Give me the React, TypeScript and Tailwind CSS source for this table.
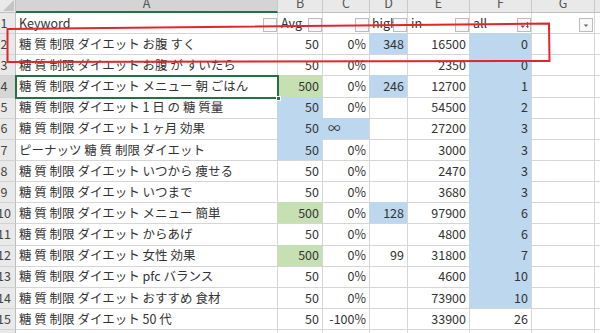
import React from "react";

type Fill = "b" | "g" | "";
type Row = {
  a: string;
  b: string;
  bf?: Fill;
  c: string;
  cf?: Fill;
  cl?: boolean;
  d: string;
  df?: Fill;
  e: string;
  f: string;
  ff?: Fill;
};

const rows: Row[] = [
  { a: "糖 質 制限 ダイエット お腹 すく", b: "50", c: "0%", d: "348", df: "b", e: "16500", f: "0", ff: "b" },
  { a: "糖 質 制限 ダイエット お腹 が すいたら", b: "50", c: "0%", d: "", e: "2350", f: "0", ff: "b" },
  { a: "糖 質 制限 ダイエット メニュー 朝 ごはん", b: "500", bf: "g", c: "0%", d: "246", df: "b", e: "12700", f: "1", ff: "b" },
  { a: "糖 質 制限 ダイエット 1 日 の 糖 質量", b: "50", bf: "b", c: "0%", d: "", e: "54500", f: "2", ff: "b" },
  { a: "糖 質 制限 ダイエット 1 ヶ月 効果", b: "50", bf: "b", c: "∞", cf: "b", cl: true, d: "", e: "27200", f: "3", ff: "b" },
  { a: "ピーナッツ 糖 質 制限 ダイエット", b: "50", bf: "b", c: "0%", d: "", e: "3000", f: "3", ff: "b" },
  { a: "糖 質 制限 ダイエット いつから 痩せる", b: "50", c: "0%", d: "", e: "2470", f: "3", ff: "b" },
  { a: "糖 質 制限 ダイエット いつまで", b: "50", c: "0%", d: "", e: "3680", f: "3", ff: "b" },
  { a: "糖 質 制限 ダイエット メニュー 簡単", b: "500", bf: "g", c: "0%", d: "128", df: "b", e: "97900", f: "6", ff: "b" },
  { a: "糖 質 制限 ダイエット からあげ", b: "50", c: "0%", d: "", e: "4800", f: "6", ff: "b" },
  { a: "糖 質 制限 ダイエット 女性 効果", b: "500", bf: "g", c: "0%", d: "99", e: "31800", f: "7", ff: "b" },
  { a: "糖 質 制限 ダイエット pfc バランス", b: "50", c: "0%", d: "", e: "4600", f: "10", ff: "b" },
  { a: "糖 質 制限 ダイエット おすすめ 食材", b: "50", c: "0%", d: "", e: "73900", f: "10", ff: "b" },
  { a: "糖 質 制限 ダイエット 50 代", b: "50", c: "-100%", d: "", e: "33900", f: "26" },
];

const base =
  "h-full shrink-0 border-r border-b border-[#d6d6d6] flex items-center overflow-hidden whitespace-nowrap";
const right = "justify-end pr-[3px]";
const fillCls = (f?: Fill) =>
  f === "b"
    ? "bg-[#bdd7ee] border-[#bdd7ee] shadow-[0_-1px_0_#bdd7ee,-1px_0_0_#bdd7ee]"
    : f === "g"
    ? "bg-[#c6e0b4] border-[#c6e0b4] shadow-[0_-1px_0_#c6e0b4,-1px_0_0_#c6e0b4]"
    : "bg-white";

function RowHead({ n, sel }: { n: number; sel?: boolean }) {
  return (
    <div
      className={`w-[16px] h-full shrink-0 border-r border-b border-r-[#bdbdbd] border-b-[#d2d2d2] flex items-center overflow-hidden text-[#444] ${
        sel ? "bg-[#d6d6d6]" : "bg-[#e9e9e9]"
      }`}
    >
      <div className="w-[24px] -ml-[8px] shrink-0 text-center">{n}</div>
    </div>
  );
}

function FilterBtn({ kind }: { kind?: "sort" | "drop" }) {
  return (
    <div className="w-[14px] h-[14px] shrink-0 self-end mb-[1px] border border-[#bcbcbc] bg-[#f8f8f8] flex items-center justify-center">
      {kind === "sort" && (
        <svg width="12" height="12" viewBox="0 0 12 12">
          <path d="M2.5 6.5 L7 6.5 L4.75 9 Z" fill="#555" />
          <path d="M9.5 3 L9.5 8.5 M8.3 7.2 L9.5 8.7 L10.7 7.2" stroke="#555" strokeWidth="0.9" fill="none" />
        </svg>
      )}
      {kind === "drop" && (
        <svg width="12" height="12" viewBox="0 0 12 12">
          <path d="M3.8 5.5 L8.2 5.5 L6 8 Z" fill="#666" />
        </svg>
      )}
    </div>
  );
}

function ColHead({ w, label, sel }: { w: string; label: string; sel?: boolean }) {
  return (
    <div
      className={`${w} h-full shrink-0 border-r border-[#c9c9c9] flex justify-center overflow-hidden text-[#555] ${
        sel ? "bg-[#d4d4d4] border-b-2 border-b-[#217346]" : "bg-[#e9e9e9] border-b border-b-[#bfbfbf]"
      }`}
    >
      <span className="block leading-[12px] -mt-[3px]">{label}</span>
    </div>
  );
}

export default function App() {
  return (
    <div className="relative w-[600px] h-[333px] overflow-hidden bg-white text-[12.5px] text-[#333] font-['Noto_Sans_CJK_JP','Noto_Sans',sans-serif]">
      <div className="flex flex-col">
        {/* column letters */}
        <div className="flex h-[13px]">
          <div className="w-[16px] h-full shrink-0 bg-[#e9e9e9] border-r border-b border-[#bfbfbf] relative overflow-hidden">
            <svg width="16" height="13" viewBox="0 0 16 13" className="absolute left-0 top-0">
              <path d="M14 0 L14 11 L3 11 Z" fill="#c4c4c4" />
            </svg>
          </div>
          <ColHead w="w-[262px]" label="A" sel />
          <ColHead w="w-[45px]" label="B" />
          <ColHead w="w-[47px]" label="C" />
          <ColHead w="w-[38px]" label="D" />
          <ColHead w="w-[62px]" label="E" />
          <ColHead w="w-[62px]" label="F" />
          <ColHead w="w-[63px]" label="G" />
          <div className="flex-1 h-full bg-[#e9e9e9] border-b border-[#bfbfbf]" />
        </div>

        {/* row 1: headers with filter buttons */}
        <div className="flex h-[21.15px]">
          <RowHead n={1} />
          <div className={`${base} w-[262px] bg-white pl-[3px]`}>
            <span className="flex-1 min-w-0 overflow-hidden">Keyword</span>
            <FilterBtn />
          </div>
          <div className={`${base} w-[45px] bg-white pl-[3px]`}>
            <span className="flex-1 min-w-0 overflow-hidden">Avg</span>
            <FilterBtn />
          </div>
          <div className={`${base} w-[47px] bg-white pl-[3px]`}>
            <span className="flex-1 min-w-0 overflow-hidden"></span>
            <FilterBtn />
          </div>
          <div className={`${base} w-[38px] bg-white pl-[2px]`}>
            <span className="flex-1 min-w-0 overflow-hidden">high</span>
            <FilterBtn />
          </div>
          <div className={`${base} w-[62px] bg-white pl-[3px]`}>
            <span className="flex-1 min-w-0 overflow-hidden">in</span>
            <FilterBtn />
          </div>
          <div className={`${base} w-[62px] bg-white pl-[3px]`}>
            <span className="flex-1 min-w-0 overflow-hidden">all</span>
            <FilterBtn kind="sort" />
          </div>
          <div className={`${base} w-[63px] bg-white pr-[1px]`}>
            <span className="flex-1 min-w-0 overflow-hidden"></span>
            <FilterBtn kind="drop" />
          </div>
          <div className="flex-1 h-full border-b border-[#d6d6d6]" />
        </div>

        {rows.map((r, i) => (
          <div key={i} className="flex h-[21.15px]">
            <RowHead n={i + 2} sel={i === 2} />
            <div className={`${base} w-[262px] bg-white pl-[3px]`}>{r.a}</div>
            <div className={`${base} w-[45px] ${right} ${fillCls(r.bf)}`}>{r.b}</div>
            <div className={`${base} w-[47px] ${r.cl ? "pl-[5px]" : right} ${fillCls(r.cf)}`}>{r.c}</div>
            <div className={`${base} w-[38px] ${right} ${fillCls(r.df)}`}>{r.d}</div>
            <div className={`${base} w-[62px] ${right} bg-white`}>{r.e}</div>
            <div className={`${base} w-[62px] ${right} ${fillCls(r.ff)}`}>{r.f}</div>
            <div className={`${base} w-[63px] bg-white`} />
            <div className="flex-1 h-full border-b border-[#d6d6d6]" />
          </div>
        ))}
        <div className="flex h-[21.15px]">
          <RowHead n={16} />
          <div className={`${base} w-[262px] bg-white`} />
          <div className={`${base} w-[45px] bg-white`} />
          <div className={`${base} w-[47px] bg-white`} />
          <div className={`${base} w-[38px] bg-white`} />
          <div className={`${base} w-[62px] bg-white`} />
          <div className={`${base} w-[62px] bg-white`} />
          <div className={`${base} w-[63px] bg-white`} />
        </div>
      </div>

      {/* selection on A4 */}
      <div className="absolute left-[15px] top-[75.45px] w-[264px] h-[23.15px] border-2 border-[#217346] pointer-events-none" />
      <div className="absolute left-[276px] top-[95.6px] w-[5px] h-[5px] bg-[#217346] border border-white pointer-events-none" />

      {/* red annotation box */}
      <svg className="absolute left-0 top-0 pointer-events-none" width="600" height="333" viewBox="0 0 600 333">
        <polygon points="7.5,29 549,23.5 549.5,61 7.5,62" fill="none" stroke="#e0262b" strokeWidth="2" />
      </svg>
    </div>
  );
}
